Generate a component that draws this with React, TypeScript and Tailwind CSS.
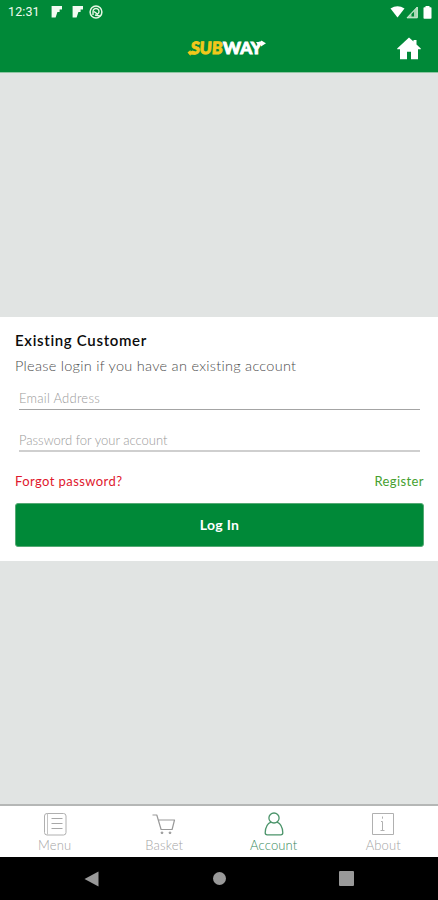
import React from 'react';

const StatusBar = () => (
  <div className="flex h-6 items-center justify-between pl-2 pr-[6px]">
    <div className="flex items-center">
      <span className="w-[43px] font-['Roboto'] text-[12.5px] leading-6 tracking-[0.1px] text-[#f2fbf0]">12:31</span>
      <svg width="12" height="12" viewBox="0 0 12 12" fill="#f2fbf2">
        <path d="M0.6 0H11v3.6H8.6v2.4H6.4L5.6 8.4 4.6 11.6H0.6z" />
      </svg>
      <svg className="ml-[9px]" width="12" height="12" viewBox="0 0 12 12" fill="#f2fbf2">
        <path d="M0.6 0H11v3.6H8.6v2.4H6.4L5.6 8.4 4.6 11.6H0.6z" />
      </svg>
      <svg className="ml-[5px]" width="14" height="14" viewBox="0 0 14 14" fill="none" stroke="#e6f6e4">
        <circle cx="7" cy="7" r="5.9" strokeWidth="1.5" />
        <path d="M4 10V6.5a3 3 0 1 1 4.5 2.6L5 6.5M6 10l5 1" strokeWidth="1.4" />
      </svg>
    </div>
    <div className="flex items-center">
      <svg width="15" height="12" viewBox="0 0 15 12" fill="#fff">
        <path d="M0.5 2.5Q7.5-2 14.5 2.5L7.5 11.5z" />
      </svg>
      <svg className="ml-[1px]" width="12" height="13" viewBox="0 0 12 13">
        <path d="M1 11.8 11.3 1v10.8z" fill="#a5d6b2" stroke="#d9f0dd" />
        <path d="M5.5 10.5V8L8 5.8v4.7z" fill="#008938" />
      </svg>
      <svg className="ml-[5px]" width="9" height="13" viewBox="0 0 9 13" fill="#fff">
        <path d="M2.5 0h4v1.3h1.2q.8 0 .8.8v9.8q0 .8-.8.8H1.3q-.8 0-.8-.8V2.1q0-.8.8-.8h1.2z" />
      </svg>
    </div>
  </div>
);

const Logo = () => (
  <svg width="80" height="20" viewBox="0 0 80 20" fontFamily="Lato, sans-serif" fontWeight="900" fontSize="17">
    <text transform="skewX(-4)" x="4.5" y="16" textLength="32" lengthAdjust="spacingAndGlyphs" fill="#f2c81b" stroke="#f2c81b" strokeWidth="0.9">SUB</text>
    <text x="36" y="16" textLength="39" lengthAdjust="spacingAndGlyphs" fill="#fff" stroke="#fff" strokeWidth="0.9">WAY</text>
    <path d="M0.5 14.5 3.5 12v1.3h5v3.4h-5V18z" fill="#f2c81b" />
    <path d="M69 4h5V2.5L79 5.3l-5 3.1V7H71z" fill="#fff" />
  </svg>
);

const MenuIcon = () => (
  <svg width="24" height="24" viewBox="0 0 24 24" fill="none" stroke="#b0b0b0">
    <rect x="1.5" y="1.5" width="21.5" height="21.5" rx="2.5" />
    <path d="M4.5 1.5v21" stroke="#c4c4c4" />
    <path d="M8.5 6.5h11M8.5 11.5h11M8.5 16.5h11" stroke="#a8a8a8" />
  </svg>
);

const BasketIcon = () => (
  <svg width="24" height="24" viewBox="0 0 24 24" fill="none" stroke="#999">
    <path d="M0.5 3h4.3l4.3 14.5h11l2.4-9.5H6.5" strokeWidth="1.2" strokeLinejoin="round" />
    <circle cx="10" cy="20.8" r="0.9" fill="#999" />
    <circle cx="18" cy="20.8" r="0.9" fill="#999" />
  </svg>
);

const AccountIcon = () => (
  <svg width="24" height="24" viewBox="0 0 24 24" fill="none" stroke="#4b946a" strokeWidth="1.3">
    <ellipse cx="12" cy="6" rx="5.1" ry="5" />
    <path d="M9 10.2C5.4 11.6 3.4 15.6 3.2 20.8q0 2 2 2h13.6q2 0 2-2c-.2-5.2-2.2-9.2-5.8-10.6" />
  </svg>
);

const AboutIcon = () => (
  <svg width="24" height="24" viewBox="0 0 24 24" fill="none" stroke="#b0b0b0">
    <path d="M1.5 1.5h21v21h-21z" />
    <path d="M11.5 4.5v2.2M10 9.5h1.5v9M9.5 18.5h4" strokeWidth="1" />
  </svg>
);

const tabs = [
  { label: 'Menu', icon: <MenuIcon />, color: 'text-[#a4a4a4]' },
  { label: 'Basket', icon: <BasketIcon />, color: 'text-[#a4a4a4]' },
  { label: 'Account', icon: <AccountIcon />, color: 'text-[#36875a]' },
  { label: 'About', icon: <AboutIcon />, color: 'text-[#a4a4a4]' },
];

const App = () => {
  return (
    <div className="flex h-[900px] w-[438px] flex-col bg-[#e1e4e3] font-['Lato',sans-serif]">
      <header className="h-[73px] border-b border-[#8fc5a3] bg-[#008938]">
        <StatusBar />
        <div className="grid h-12 grid-cols-3 items-center">
          <span />
          <div className="flex justify-center pl-4">
            <Logo />
          </div>
          <button className="flex justify-end pr-[17px]" aria-label="Home">
            <svg width="24" height="23" viewBox="0 0 24 23" fill="#fff">
              <path d="M12 0.5 16.5 4.6V3h3v4.4L23.8 11.4v.8H21v10.1h-7v-7.5h-4v7.5H3V12.2H0.2v-.8z" />
            </svg>
          </button>
        </div>
      </header>

      <main className="flex flex-1 flex-col pt-[244px]">
        <div className="flex h-[244px] flex-col bg-white pl-[15px] pr-[14px] pt-[13px]">
          <h1 className="h-5 text-[15px] font-semibold leading-5 tracking-[0.67px] text-[#0c0c0c]">Existing Customer</h1>
          <p className="mt-[6px] h-5 whitespace-nowrap text-[14.5px] font-light leading-5 tracking-[0.28px] text-[#4c4c4c]">
            Please login if you have an existing account
          </p>
          <div className="mx-1 mt-[13px] h-[21px] border-b border-[#a4a4a4] text-[13px] font-light leading-[19px] tracking-[0.25px] text-[#999]">
            Email Address
          </div>
          <div className="mx-1 mt-[21px] h-[21px] border-b-2 border-[#cfcfcf] text-[13px] font-light leading-[19px] text-[#999]">
            Password for your account
          </div>
          <div className="mt-[19px] flex h-5 justify-between text-[13px] leading-5">
            <a className="tracking-[0.42px] text-[#e0182d]">Forgot password?</a>
            <a className="tracking-[0.4px] text-[#45a02f]">Register</a>
          </div>
          <button className="mt-3 h-11 rounded-[3px] border border-[#55aa74] bg-[#008938] pb-[2px] text-[14px] font-bold tracking-[0.3px] text-white">
            Log In
          </button>
        </div>
      </main>

      <nav className="grid h-[53px] grid-cols-4 border-t-2 border-[#b5b7b6] bg-white pt-[6px]">
        {tabs.map((tab) => (
          <div key={tab.label} className={`flex flex-col items-center text-[13px] font-light leading-[18px] tracking-[0.15px] ${tab.color}`}>
            {tab.icon}
            <span>{tab.label}</span>
          </div>
        ))}
      </nav>

      <div className="flex h-[43px] items-center bg-black pl-[84px]">
        <svg width="15" height="16" viewBox="0 0 15 16" fill="#999">
          <path d="M0.5 8 14.5 0.5v15z" />
        </svg>
        <div className="ml-[114px] size-[13px] rounded-full bg-[#999]" />
        <div className="ml-[113px] size-[15px] rounded-[1px] bg-[#999]" />
      </div>
    </div>
  );
};

export default App;
